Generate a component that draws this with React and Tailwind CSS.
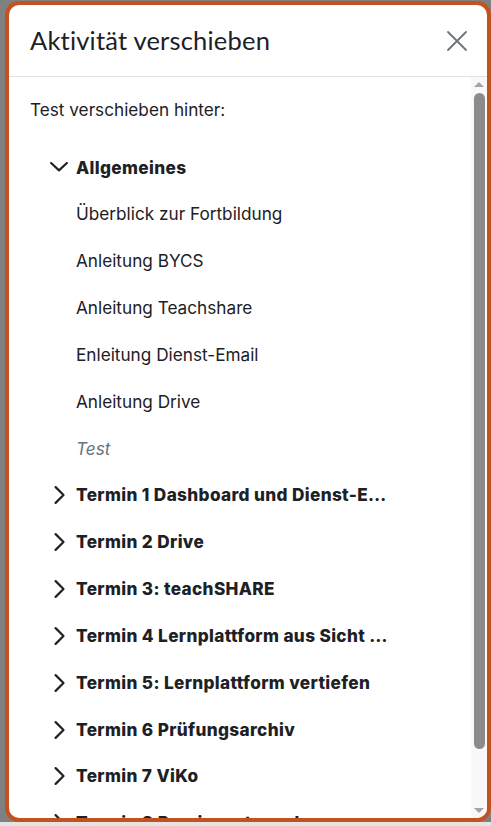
import React from 'react'

const sub = [
  'Überblick zur Fortbildung',
  'Anleitung BYCS',
  'Anleitung Teachshare',
  'Enleitung Dienst-Email',
  'Anleitung Drive',
]

const sections = [
  'Termin 1 Dashboard und Dienst-Email',
  'Termin 2 Drive',
  'Termin 3: teachSHARE',
  'Termin 4 Lernplattform aus Sicht der Lehrkraft',
  'Termin 5: Lernplattform vertiefen',
  'Termin 6 Prüfungsarchiv',
  'Termin 7 ViKo',
  'Termin 8 Praxisaustausch',
]

function Chevron({ down }) {
  return (
    <svg width="18" height="18" viewBox="0 0 16 16" fill="none" stroke="#1d2125" strokeWidth="1.9" strokeLinecap="round" strokeLinejoin="round">
      {down ? <path d="M1 4.5l7 6.5 7-6.5" /> : <path d="M5 1l7 7-7 7" />}
    </svg>
  )
}

export default function App() {
  return (
    <div className="flex h-[826px] w-[491px] flex-col overflow-hidden bg-[#e4e4e4]" style={{ fontFamily: 'Inter, "Noto Sans", sans-serif' }}>
      <div className="flex-1 bg-[#808080] pl-[9px] pr-[4px] pt-[5px]">
        <div className="flex h-[813px] w-[478px] flex-col overflow-hidden rounded-[10px] bg-white ring-4 ring-[#c4521f]">
          {/* header */}
          <div className="flex h-[72px] shrink-0 items-center justify-between border-b border-[#dee2e6] pl-[21px] pr-[19px]">
            <h5 className="text-[25.5px] tracking-[0.2px] text-[#1d2125]" style={{ fontFamily: 'Lato, sans-serif' }}>Aktivität verschieben</h5>
            <svg width="22" height="22" viewBox="0 0 22 22" stroke="#6a737b" strokeWidth="1.8" strokeLinecap="round">
              <path d="M2 2l18 18M20 2L2 20" />
            </svg>
          </div>

          {/* body */}
          <div className="flex min-h-0 flex-1">
            <div className="min-w-0 flex-1 overflow-hidden pl-[21px] pt-[21px]">
              <p className="mb-[22px] text-[17.2px] leading-6 text-[#1d2125]">Test verschieben hinter:</p>
              <div className="pl-[20px]">
                <div className="flex h-[46.85px] items-center gap-[8px]">
                  <Chevron down />
                  <span className="text-[17.2px] font-extrabold tracking-[0.35px] text-[#1d2125]">Allgemeines</span>
                </div>
                {sub.map((s) => (
                  <div key={s} className="flex h-[46.85px] items-center pl-[26px] text-[17.2px] text-[#1d2125]">{s}</div>
                ))}
                <div className="flex h-[46.85px] items-center pl-[26px] text-[17.2px] italic text-[#6a737b]">Test</div>
                {sections.map((s) => (
                  <div key={s} className="flex h-[46.85px] items-center gap-[8px]">
                    <Chevron />
                    <span className="max-w-[316px] truncate text-[17.2px] font-extrabold tracking-[0.35px] text-[#1d2125]">{s}</span>
                  </div>
                ))}
              </div>
            </div>

            {/* scrollbar */}
            <div className="flex w-[16px] shrink-0 flex-col items-center bg-[#f8f8f8] py-[5px]">
              <div className="h-0 w-0 border-x-[5px] border-b-[5px] border-x-transparent border-b-[#a3a3a3]" />
              <div className="mt-[6px] h-[656px] w-[11px] rounded-full bg-[#8b8b8b]" />
              <div className="flex-1" />
              <div className="h-0 w-0 border-x-[5px] border-t-[5px] border-x-transparent border-t-[#a3a3a3]" />
            </div>
          </div>
        </div>
      </div>
      <div className="h-[4px] shrink-0" />
    </div>
  )
}
